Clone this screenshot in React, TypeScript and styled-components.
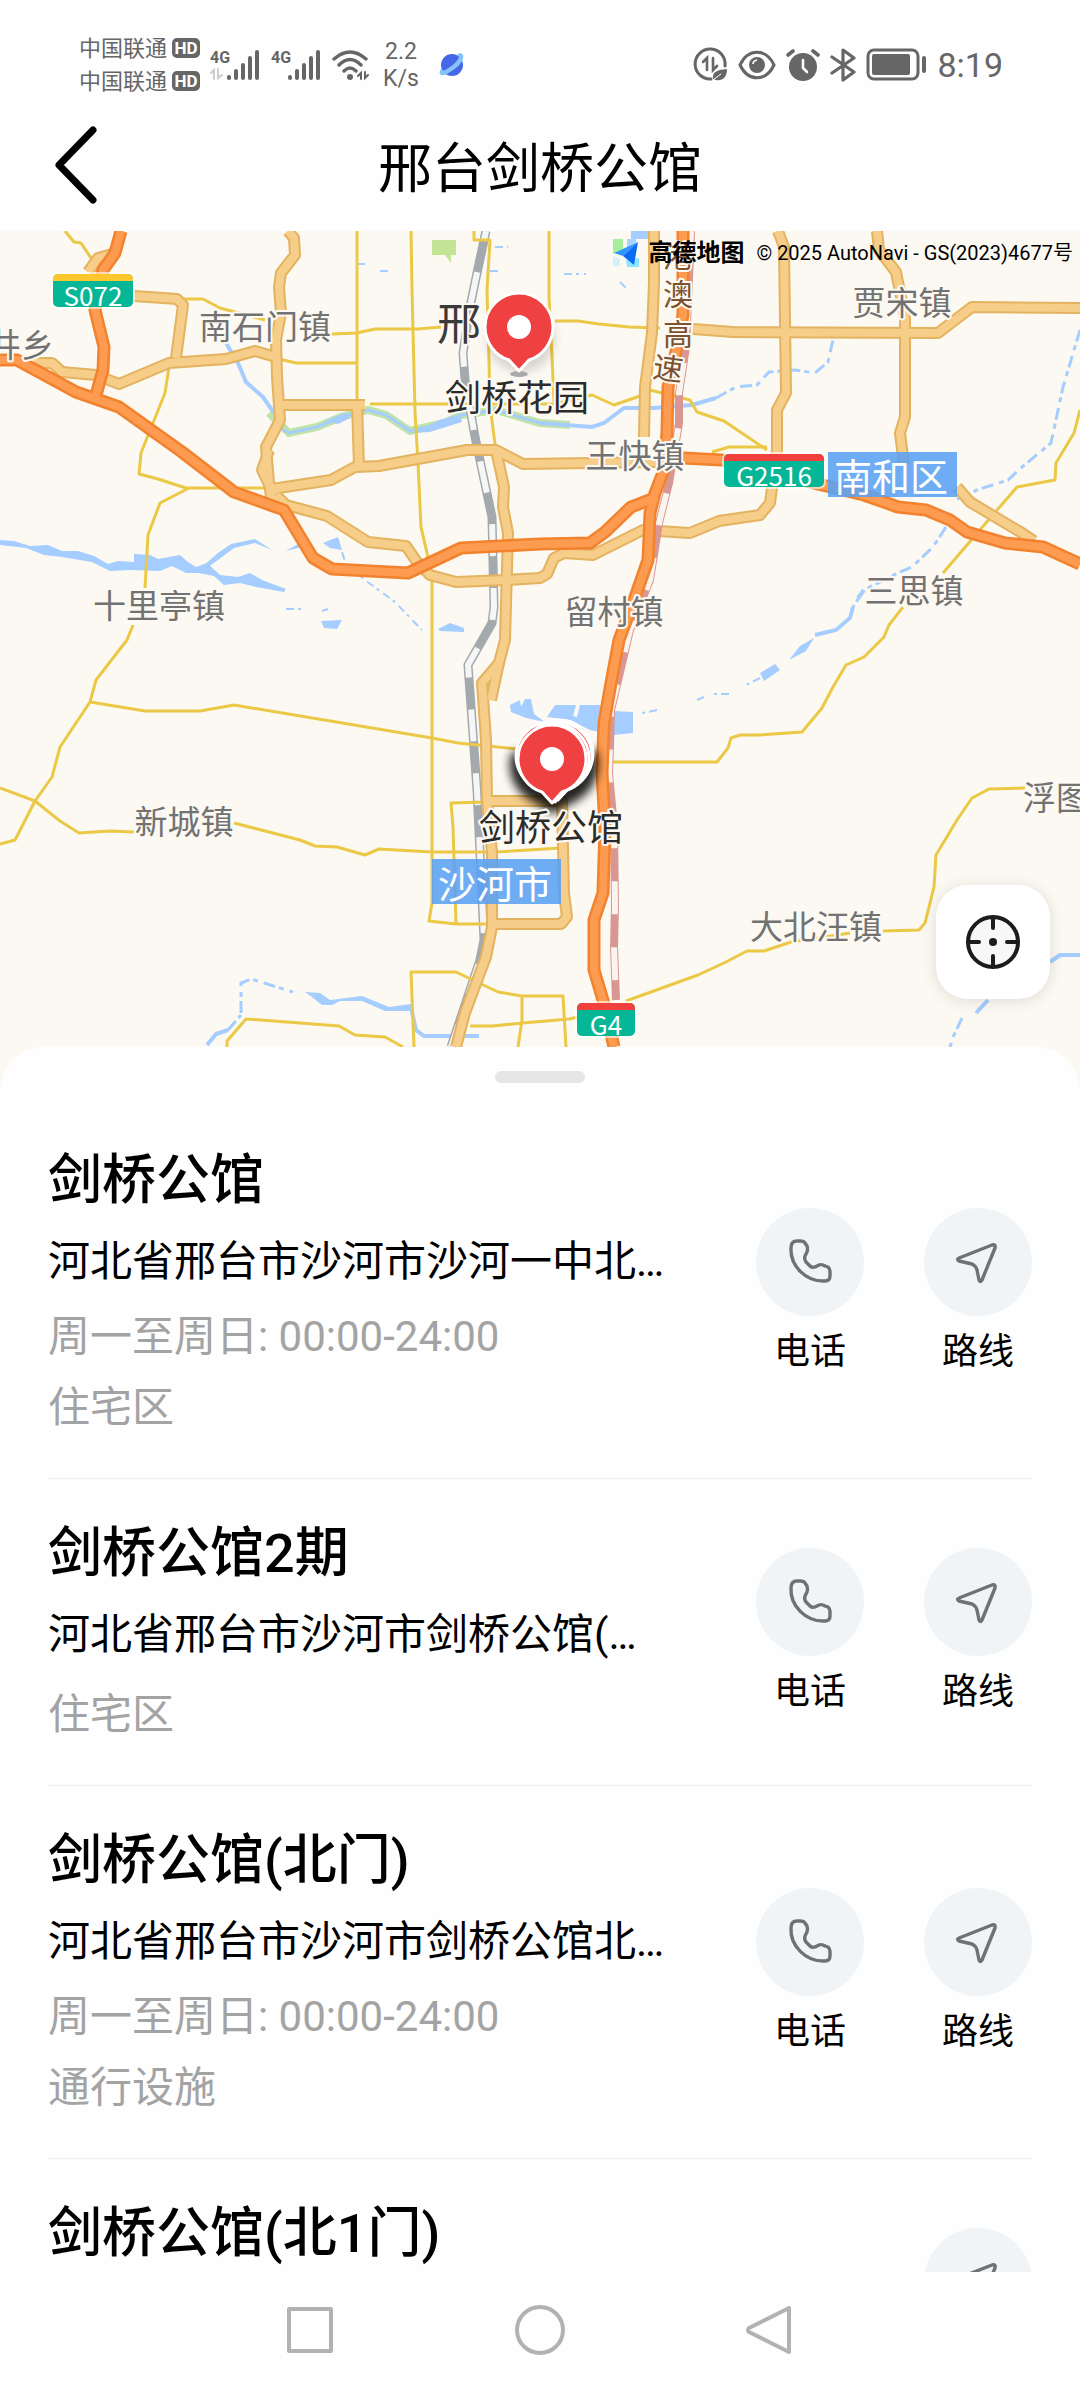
import React from "react";
import styled, { createGlobalStyle } from "styled-components";

const GlobalStyle = createGlobalStyle`
  * { box-sizing: border-box; }
  body {
    margin: 0;
    background: #fefefe;
    color: #000;
    font-family: Roboto, "Noto Sans CJK SC", sans-serif;
  }
  button { font: inherit; color: inherit; border: 0; padding: 0; background: none; cursor: pointer; }
  svg { display: block; }
`;

const Screen = styled.div`
  display: flex;
  flex-direction: column;
  height: 100vh;
  overflow: hidden;
`;

/* ---------- status bar ---------- */

const StatusBar = styled.div`
  display: flex;
  flex: none;
  justify-content: space-between;
  align-items: center;
  height: 105px;
  padding: 24px 77px 0 79px;
  color: #666;
`;

const StatusGroup = styled.div`
  display: flex;
  align-items: center;
  gap: 10px;
`;

const CarrierLine = styled.div`
  display: flex;
  align-items: center;
  gap: 5px;
  font-size: 22px;
  line-height: 33px;
`;

const HdBadge = styled.span`
  width: 28px;
  height: 20px;
  border-radius: 5px;
  background: #666;
  color: #fff;
  font-size: 17px;
  font-weight: 700;
  line-height: 20px;
  text-align: center;
`;

const Speed = styled.div`
  padding: 0 10px 0 3px;
  font-size: 23px;
  line-height: 27px;
  text-align: center;
`;

const Clock = styled.div`
  font-size: 34px;
  line-height: 40px;
`;

function Signal({ data }: { data?: boolean }) {
  return (
    <svg width="51" height="32" viewBox="0 0 51 32" fill="none" stroke="#666" strokeLinecap="round">
      <text x="0" y="14" fill="#666" stroke="none" fontSize="16" fontWeight="700">4G</text>
      {data && <path d="M1 24l3-3v9M8 20v9l4-3" stroke="#ccc" strokeWidth="2" />}
      <path d="M19 28v1M26 22v7M33 16v13M40 9v20M47 3v26" strokeWidth="4" />
    </svg>
  );
}

function Wifi() {
  return (
    <svg width="38" height="32" viewBox="0 0 38 32" fill="none" stroke="#666" strokeWidth="3.4" strokeLinecap="round">
      <path d="M2 10Q18 -4 34 10M7 16Q18 5 29 16M12 22Q18 16 24 22" />
      <circle cx="18" cy="28" r="3" fill="#666" stroke="none" />
      <path d="M26 27l3-3v6M33 23v6l3-3" strokeWidth="2" />
    </svg>
  );
}

function Planet() {
  return (
    <svg width="26" height="26" viewBox="0 0 26 26">
      <circle cx="13" cy="13" r="11" fill="#4668e8" />
      <path d="M21 1c6 1 3 9-3 14S3 26 1 22c-1-2 0-4 2-6 0 3 2 3 5 1C13 14 19 9 20 5c0-1-1-2-2-2 1-1 2-2 3-2z" fill="#84c4fa" />
    </svg>
  );
}

function DataSaver() {
  return (
    <svg width="35" height="35" viewBox="0 0 35 35" fill="none" stroke="#666" strokeWidth="3" strokeLinecap="round">
      <path d="M32 19A15 15 0 1 0 18 32" />
      <path d="M10 15l4-4v12M20 11v12l4-4" strokeWidth="2.6" />
      <path d="M20 32c-1-8 5-9 14-10 0 9-5 12-11 11z" fill="#666" stroke="none" />
      <path d="M20 33l8-6" stroke="#fff" strokeWidth="1" />
    </svg>
  );
}

function Eye() {
  return (
    <svg width="38" height="30" viewBox="0 0 38 30" fill="none" stroke="#666" strokeWidth="3">
      <path d="M2 15C10-2 28-2 36 15 28 32 10 32 2 15z" />
      <circle cx="19" cy="15" r="8" fill="#666" stroke="none" />
      <path d="M15 14q0-3 4-4" stroke="#fff" strokeWidth="1.6" />
    </svg>
  );
}

function Alarm() {
  return (
    <svg width="34" height="34" viewBox="0 0 34 34" fill="none" stroke="#666" strokeWidth="3.6" strokeLinecap="round">
      <circle cx="17" cy="19" r="14" fill="#666" stroke="none" />
      <path d="M2 7l5-4M32 7l-5-4" />
      <path d="M17 12v8l4 4" stroke="#fff" strokeWidth="2.6" />
    </svg>
  );
}

function Bluetooth() {
  return (
    <svg width="26" height="34" viewBox="0 0 26 34" fill="none" stroke="#666" strokeWidth="3.2" strokeLinecap="round" strokeLinejoin="round">
      <path d="M2 9l22 15-11 8V2l11 8L2 25" />
    </svg>
  );
}

function Battery() {
  return (
    <svg width="61" height="33" viewBox="0 0 61 33" fill="none" stroke="#666">
      <rect x="2" y="2" width="50" height="29" rx="6" strokeWidth="3" />
      <rect x="6" y="6" width="38" height="21" rx="2" fill="#666" stroke="none" />
      <path d="M58 10v13" strokeWidth="4" strokeLinecap="round" />
    </svg>
  );
}

/* ---------- header ---------- */

const Header = styled.header`
  display: grid;
  grid-template-columns: 96px 1fr 96px;
  align-items: center;
  flex: none;
  height: 126px;
  padding: 0 32px;
`;

const BackButton = styled.button`
  display: flex;
  padding-left: 20px;
`;

const Title = styled.h1`
  margin: 0;
  padding-top: 4px;
  font-size: 54px;
  font-weight: 400;
  line-height: 72px;
  text-align: center;
`;

/* ---------- map ---------- */

const MapArea = styled.section`
  position: relative;
  flex: none;
  height: 864px;
  overflow: hidden;
  background: #fcf9f2;
`;

const MapCanvas = styled.svg`
  width: 100%;
  height: 100%;
`;

const Attribution = styled.div`
  position: absolute;
  top: 7px;
  right: 7px;
  display: flex;
  align-items: center;
  font-size: 20px;
  line-height: 30px;
`;

const Brand = styled.strong`
  margin: 0 12px 0 8px;
  font-size: 24px;
  font-weight: 700;
`;

const LocateButton = styled.button`
  position: absolute;
  right: 30px;
  bottom: 96px;
  display: grid;
  place-items: center;
  width: 114px;
  height: 114px;
  border-radius: 32px;
  background: #fff;
  box-shadow: 0 2px 16px rgba(0, 0, 0, 0.12);
`;

const MapLabel = styled.text<{ $size?: number; $color?: string }>`
  font-size: ${(p) => p.$size ?? 33}px;
  fill: ${(p) => p.$color ?? "#727272"};
  stroke: #fcf9f2;
  stroke-width: 4px;
  stroke-linejoin: round;
  paint-order: stroke;
  text-anchor: middle;
  dominant-baseline: central;
`;

const PlateText = styled.text<{ $size: number }>`
  font-family: "Noto Sans CJK SC", "Noto Sans", sans-serif;
  font-size: ${(p) => p.$size}px;
  fill: #fff;
  text-anchor: middle;
  dominant-baseline: central;
`;

const minorRoads = [
  "M65 1L74 12L81 13L91 28L96 42",
  "M183 69L203 69L220 78L265 90",
  "M357 1V170",
  "M411 1L412 60L415 182L418 233L421 297L427 323L432 350V673L429 691L456 694H486",
  "M474 1V10H490L487 60L489 130L490 175L496 222",
  "M332 104L357 103L375 99H418L441 97",
  "M279 129L296 133H357",
  "M370 174H554L592 165L614 175L640 166",
  "M169 137L165 163L141 223L139 244L158 249L186 258H272",
  "M189 258L160 273L148 305L145 358",
  "M133 395L127 410L96 450L90 472L60 517L52 547L35 571L15 610L0 614",
  "M90 472L145 481H200L234 475L432 508L458 513L517 519",
  "M0 558L35 571L60 591L79 603L110 601L134 602",
  "M234 593L300 610L315 616L337 617L365 625L379 619L432 622H496L561 618",
  "M486 572L451 573L453 597L456 693",
  "M414 817L411 742H456L498 762L522 766H563L566 817",
  "M522 766V790L518 817",
  "M470 796H492L523 793L569 789L578 787",
  "M227 817V811L246 789L339 796L355 805L385 807L403 817",
  "M549 1V67L552 127L554 172",
  "M555 91H578L599 94L629 97L660 98",
  "M1080 180L1074 203L1056 233L1055 250L1017 257L991 287L943 343",
  "M903 377L889 395L884 407L864 427L846 435L833 457L822 478L802 502L760 505H740L731 508L728 518L717 532H611",
  "M1025 558L989 559L972 568L957 590L936 625L934 657L925 693L919 700L883 701",
  "M850 703L791 712L764 721H747L726 732L698 745L626 771",
  "M650 160L690 170L697 182L724 191L767 220",
  "M712 222L729 217H767",
];

const majorRoads = [
  "M134 66L177 69L183 75L176 128",
  "M88 42L98 28L112 24",
  "M288 1L294 8L295 25L281 43L279 57L281 83L276 110L277 147L280 190L266 217L269 253L272 273",
  "M269 220L262 240L274 265",
  "M34 133H52L62 142L96 145L119 154L169 133L226 129L255 121L276 127",
  "M281 175H365M357 173L359 237",
  "M272 259L331 250L355 237L379 236L467 220H496L523 234L660 232",
  "M276 265L286 275L327 286L368 312L406 316L417 332L430 345L456 352L506 350L540 348L547 344L554 328L564 323L593 325L643 300L690 303L719 291L760 285L770 273L777 220V180L786 163L784 17L778 1",
  "M496 220L504 257L503 277L508 303L505 410L499 433L482 453L486 510L487 570L492 623V697L486 727L465 783L456 817",
  "M499 433L491 470",
  "M491 571H562L564 663L567 687L561 694H492",
  "M654 1V53L652 103L645 157L644 207",
  "M693 99L733 102L938 103L972 77L1080 78",
  "M877 1L879 20L896 42L905 87V187L900 203L904 235",
  "M957 257L970 272L1022 303L1034 311",
];

const highways = [
  "M121 1L115 23L103 40L95 80L104 117L103 140L96 165",
  "M0 130H17L76 162L119 177L182 222L234 262L284 280L313 328L332 339L408 343L461 318L540 314L590 313L605 302L631 277L657 267",
  "M683 1V85L677 117L668 157L667 203L664 240L655 263L650 283L648 330L633 373L619 410L611 453L604 493L602 543L605 597L603 663L594 690V740L605 777L614 817",
  "M683 228L722 230L822 255L864 265L898 277L926 280L950 290L967 302L1005 313L1043 317L1080 334",
];

const railway =
  "M486 1L477 43L470 77L463 123L465 150L475 207L492 287L494 377L492 393L468 435L477 560L480 623L484 710L480 730L451 817";
const fastRail = "M691 1L686 117L679 163V193L669 253L659 293L650 350L630 400L611 480L610 517L609 543L614 597L615 677L614 717L616 770";

const waterAreas = [
  "M0 310L14 311L30 316L48 315L62 321L78 321L94 326L108 334L118 331L134 332V324L150 325L158 329L180 325L188 332L196 337L207 333L220 345L238 347L250 343L262 350L286 359L284 362L256 357L240 353L224 355L214 346L198 343L186 343L172 336L160 341L130 340L110 341L92 332L62 327L44 325L26 318L0 315z",
  "M203 336L218 323L231 314L255 309L272 320L255 313L234 318L222 327L207 338z",
  "M286 321L298 314L306 312L298 318z",
  "M323 313L338 307L342 320L330 318z",
  "M321 391L342 390L337 399L324 398z",
  "M438 399L450 393L464 398V402L440 401z",
  "M547 487L555 475H576L573 486L577 487L580 475H600L614 481L633 482V503L614 505L590 500L570 490z",
  "M510 475L520 470L521 477L525 469H531L534 484L545 492L526 488L511 482z",
  "M760 443L775 434L780 440L764 451zM789 430L800 416L814 408L806 421z",
  "M305 762L320 763L330 770L362 766L389 777L411 774V781H385L362 771L340 771L332 775H322L312 767z",
];

const streams = [
  "M226 113L238 133L246 152L263 167L274 183",
  "M540 193L592 197L604 193L624 178L654 178L692 175L716 168",
  "M411 777L416 800L424 806H479",
  "M207 815L216 804L228 800",
  "M1080 725L1060 725L1050 732M988 770L976 783",
  "M853 377L850 388L836 400L815 405",
  "M864 360L858 368",
];

const brokenStreams = [
  "M716 168L736 157L757 155L769 142L795 140L815 143L828 132L833 110",
  "M1080 100L1063 157L1051 213L1022 237L1008 250L977 260L955 270",
  "M946 297L933 317L912 337L898 343L864 360L853 377",
  "M241 783V753L251 749L293 762",
  "M228 800L241 785",
  "M962 788L953 807L950 817",
];

const faintStreams = [
  "M760 448L744 456M729 464H714M704 467L697 470M657 480L638 484",
  "M342 322L346 334L365 350L395 372L422 400",
  "M286 379H306M322 381L328 379",
  "M357 34H368M380 41H390M495 17H508M490 41H498M564 44H586M620 52L628 60",
];

const labels: [string, number, number][] = [
  ["南石门镇", 265, 97],
  ["井乡", 21, 115],
  ["十里亭镇", 159, 376],
  ["贾宋镇", 902, 73],
  ["王快镇", 635, 226],
  ["留村镇", 614, 382],
  ["三思镇", 914, 361],
  ["新城镇", 184, 592],
  ["大北汪镇", 816, 697],
  ["浮图", 1056, 568],
];

function Plate({ x, y, width, band, children }: { x: number; y: number; width: number; band: string; children: string }) {
  return (
    <g>
      <rect x={x - 2} y={y - 2} width={width + 4} height={37} rx={7} fill="#fff" opacity={0.6} />
      <rect x={x} y={y} width={width} height={33} rx={5} fill="#06b797" />
      <path d={`M${x} ${y + 7}v-2a5 5 0 0 1 5 -5h${width - 10}a5 5 0 0 1 5 5v2z`} fill={band} />
      <PlateText $size={26} x={x + width / 2} y={y + 20}>{children}</PlateText>
    </g>
  );
}

function District({ x, y, children }: { x: number; y: number; children: string }) {
  return (
    <g>
      <rect x={x} y={y} width={129} height={45} fill="#5aa0f2" opacity={0.88} />
      <PlateText $size={38} x={x + 63} y={y + 22}>{children}</PlateText>
    </g>
  );
}

function Pin({ x, y }: { x: number; y: number }) {
  return (
    <g transform={`translate(${x} ${y})`}>
      <path
        d="M0 44L-10 33C-24 29 -34 15 -34 0A34 34 0 0 1 34 0C34 15 24 29 10 33z"
        fill="#f04142"
        stroke="#fff"
        strokeWidth="3"
        strokeLinejoin="round"
      />
      <circle r="12" fill="#fff" />
    </g>
  );
}

function CityMap() {
  return (
    <MapCanvas viewBox="0 1 1080 864" preserveAspectRatio="xMidYMin slice" fill="none" role="img" aria-label="地图">
      <defs>
        <filter id="soft" x="-50%" y="-50%" width="200%" height="200%">
          <feGaussianBlur stdDeviation="5" />
        </filter>
      </defs>
      <path d="M432 10h24v15h-5v8l-6-8h-13z" fill="#c4e596" />
      <path d="M631 1h18v8h-18z" fill="#a5cdff" />
      <path d="M269 183L289 203L317 197L341 187L368 180L386 185L410 201L444 193L461 185L496 180L540 193L570 195" stroke="#bfe3a8" strokeWidth="8" />
      <path d="M280 198L289 203L317 197L341 187L368 180L386 185L410 201L444 193L461 185L496 180L540 193" stroke="#a5cdff" strokeWidth="3" />
      <path d="M325 191L344 183L350 188L338 194zM410 203L440 190L460 184L462 192L430 202z" fill="#a5cdff" />
      {waterAreas.map((d) => <path key={d} d={d} fill="#a5cdff" />)}
      {streams.map((d) => <path key={d} d={d} stroke="#a5cdff" strokeWidth="4" />)}
      {brokenStreams.map((d) => <path key={d} d={d} stroke="#a5cdff" strokeWidth="3" strokeDasharray="12 4 5 6" />)}
      {faintStreams.map((d) => <path key={d} d={d} stroke="#a5cdff" strokeWidth="2" strokeDasharray="8 4 3 5" />)}

      <path d={railway} stroke="#a4a9ad" strokeWidth="9" />
      <path d={railway} stroke="#f6f6f6" strokeWidth="6" strokeDasharray="32 32" strokeDashoffset="-42" />

      {minorRoads.map((d) => <path key={d} d={d} stroke="#ebc846" strokeWidth="3" strokeLinejoin="round" />)}

      <g strokeLinejoin="round">
        {majorRoads.map((d) => <path key={d} d={d} stroke="#e3b35f" strokeWidth="12" />)}
        {majorRoads.map((d) => <path key={d} d={d} stroke="#f7cd8a" strokeWidth="8" />)}
        <path d={fastRail} stroke="#d99794" strokeWidth="8" />
        <path d={fastRail} stroke="#fbf3ee" strokeWidth="6" strokeDasharray="33 33" />
        {highways.map((d) => <path key={d} d={d} stroke="#f2822e" strokeWidth="13" />)}
        {highways.map((d) => <path key={d} d={d} stroke="#fd9c50" strokeWidth="8" />)}
      </g>

      {labels.map(([name, x, y]) => <MapLabel key={name} x={x} y={y}>{name}</MapLabel>)}
      <MapLabel $size={44} $color="#3a3a3a" x={459} y={95}>邢</MapLabel>
      <MapLabel $size={30} $color="#7c5230" x={678} y={26}>港</MapLabel>
      <MapLabel $size={30} $color="#7c5230" x={678} y={64}>澳</MapLabel>
      <MapLabel $size={30} $color="#7c5230" x={678} y={104}>高</MapLabel>
      <MapLabel $size={30} $color="#7c5230" x={668} y={139} transform="rotate(8 668 139)">速</MapLabel>

      <Plate x={53} y={44} width={80} band="#fbc72c">S072</Plate>
      <Plate x={724} y={224} width={100} band="#f2403c">G2516</Plate>
      <Plate x={577} y={773} width={58} band="#f2403c">G4</Plate>
      <District x={828} y={222}>南和区</District>
      <District x={432} y={629}>沙河市</District>

      <circle cx="521" cy="108" r="34" fill="#000" opacity="0.14" filter="url(#soft)" />
      <ellipse cx="519" cy="144" rx="9" ry="3" fill="#aaa" />
      <Pin x={519} y={97} />
      <MapLabel $size={36} $color="#2b2b2b" x={517} y={169}>剑桥花园</MapLabel>

      <path d="M512 522a40 40 0 0 0 22 50l18 12 26-14a42 42 0 0 0 18-50z" fill="#000" opacity="0.85" filter="url(#soft)" />
      <Pin x={550} y={526} />
      <Pin x={559} y={524} />
      <Pin x={558} y={526} />
      <Pin x={555} y={528} />
      <Pin x={552} y={529} />
      <MapLabel $size={36} $color="#2b2b2b" x={551} y={599}>剑桥公馆</MapLabel>
    </MapCanvas>
  );
}

/* ---------- sheet with the places ---------- */

const Sheet = styled.main`
  position: relative;
  flex: 1;
  min-height: 0;
  margin-top: -48px;
  overflow: hidden;
  border-radius: 44px 44px 0 0;
  background: #fefefe;
`;

const HandleArea = styled.div`
  display: flex;
  justify-content: center;
  height: 59px;
  padding-top: 24px;
`;

const Handle = styled.span`
  width: 90px;
  height: 12px;
  border-radius: 6px;
  background: #e6e6e6;
`;

const PlaceList = styled.ul`
  margin: 0;
  padding: 0 48px;
  list-style: none;
`;

const PlaceItem = styled.li`
  display: flex;
  justify-content: space-between;
  align-items: center;
  min-height: 307px;
  padding: 39px 0 47px;
  border-bottom: 1px solid #f0f0f0;
`;

const PlaceInfo = styled.div`
  align-self: flex-start;
  min-width: 0;
`;

const PlaceName = styled.h2`
  margin: 0 0 16px;
  font-size: 54px;
  font-weight: 500;
  line-height: 72px;
`;

const Address = styled.p`
  margin: 0;
  font-size: 42px;
  line-height: 58px;
  white-space: nowrap;
`;

const Meta = styled.p<{ $space: number }>`
  margin: ${(p) => p.$space}px 0 0;
  color: #a3a3a3;
  font-size: 42px;
  line-height: 46px;
`;

const Actions = styled.div`
  display: flex;
  gap: 60px;
  margin: -39px 0 -47px;
`;

const ActionButton = styled.button`
  display: flex;
  flex-direction: column;
  align-items: center;
  gap: 12px;
  min-height: 168px;
  font-size: 36px;
  line-height: 48px;
`;

const ActionCircle = styled.span`
  display: grid;
  place-items: center;
  width: 108px;
  height: 108px;
  border-radius: 50%;
  background: #f0f4f7;
`;

function PhoneIcon() {
  return (
    <svg width="48" height="48" viewBox="0 0 48 48" fill="none" stroke="#6f7275" strokeWidth="3.4" strokeLinejoin="round">
      <path d="M5 10Q5 3 11 3H14Q18 3 19 5L21 8Q22 11 21 14L19 18Q18 21 20 24L24 28Q26 30 29 29L33 27Q36 26 39 28L42 29Q44 31 44 33V38Q44 43 39 43C20 44 4 28 5 10z" />
    </svg>
  );
}

function RouteIcon() {
  return (
    <svg width="48" height="48" viewBox="0 0 48 48" fill="none" stroke="#6f7275" strokeWidth="3.4" strokeLinejoin="round">
      <path d="M5 20L38 7Q42 6 41 10L28 42Q26 45 25 42L23 32Q22 28 18 26L5 23Q2 21 5 20z" />
    </svg>
  );
}

interface Place {
  name: string;
  address?: string;
  hours?: string;
  category?: string;
  phone: boolean;
}

const places: Place[] = [
  { name: "剑桥公馆", address: "河北省邢台市沙河市沙河一中北…", hours: "周一至周日: 00:00-24:00", category: "住宅区", phone: true },
  { name: "剑桥公馆2期", address: "河北省邢台市沙河市剑桥公馆(…", category: "住宅区", phone: true },
  { name: "剑桥公馆(北门)", address: "河北省邢台市沙河市剑桥公馆北…", hours: "周一至周日: 00:00-24:00", category: "通行设施", phone: true },
  { name: "剑桥公馆(北1门)", phone: false },
];

function PlaceRow({ place }: { place: Place }) {
  return (
    <PlaceItem>
      <PlaceInfo>
        <PlaceName>{place.name}</PlaceName>
        {place.address && <Address>{place.address}</Address>}
        {place.hours && <Meta $space={23}>{place.hours}</Meta>}
        {place.category && <Meta $space={place.hours ? 25 : 28}>{place.category}</Meta>}
      </PlaceInfo>
      <Actions>
        {place.phone && (
          <ActionButton type="button">
            <ActionCircle><PhoneIcon /></ActionCircle>
            电话
          </ActionButton>
        )}
        <ActionButton type="button" aria-label="路线">
          <ActionCircle><RouteIcon /></ActionCircle>
          {place.phone && "路线"}
        </ActionButton>
      </Actions>
    </PlaceItem>
  );
}

/* ---------- system navigation ---------- */

const NavBar = styled.nav`
  display: flex;
  flex: none;
  justify-content: center;
  align-items: center;
  gap: 180px;
  height: 116px;
  background: #fefefe;
`;

function NavIcon({ d }: { d: string }) {
  return (
    <svg width="50" height="50" viewBox="0 0 50 50" fill="none" stroke="#b2b2b2" strokeWidth="4" strokeLinejoin="round">
      <path d={d} />
    </svg>
  );
}

export default function App() {
  return (
    <Screen lang="zh-CN">
      <GlobalStyle />
      <StatusBar>
        <StatusGroup>
          <div>
            <CarrierLine>中国联通<HdBadge>HD</HdBadge></CarrierLine>
            <CarrierLine>中国联通<HdBadge>HD</HdBadge></CarrierLine>
          </div>
          <Signal data />
          <Signal />
          <Wifi />
          <Speed>2.2<br />K/s</Speed>
          <Planet />
        </StatusGroup>
        <StatusGroup>
          <DataSaver />
          <Eye />
          <Alarm />
          <Bluetooth />
          <Battery />
          <Clock>8:19</Clock>
        </StatusGroup>
      </StatusBar>

      <Header>
        <BackButton type="button" aria-label="返回">
          <svg width="48" height="84" viewBox="0 0 48 84" fill="none" stroke="#000" strokeWidth="7" strokeLinecap="round" strokeLinejoin="round">
            <path d="M41 4L7 39L41 74" />
          </svg>
        </BackButton>
        <Title>邢台剑桥公馆</Title>
      </Header>

      <MapArea>
        <CityMap />
        <Attribution>
          <svg width="28" height="30" viewBox="0 0 28 30">
            <path d="M1 1h10v10L1 16z" fill="#a6ee9c" />
            <path d="M15 1h9v4l-9 4z" fill="#a5d4ff" />
            <path d="M14 22l13-2v9H15z" fill="#8fe4ff" />
            <path d="M1 18l7 3v7H1z" fill="#d4f1fb" />
            <path d="M26 4L2 15l9 3z" fill="#2f95ff" />
            <path d="M26 4L11 18l11 9z" fill="#0a6cf5" />
          </svg>
          <Brand>高德地图</Brand>
          © 2025 AutoNavi - GS(2023)4677号
        </Attribution>
        <LocateButton type="button" aria-label="定位">
          <svg width="56" height="56" viewBox="0 0 56 56" fill="none" stroke="#1c1c1c" strokeWidth="4" strokeLinecap="round">
            <circle cx="28" cy="28" r="25" fill="#f7f7f7" />
            <path d="M28 4v10M28 42v10M4 28h10M42 28h10" />
            <circle cx="28" cy="28" r="4" fill="#1c1c1c" stroke="none" />
          </svg>
        </LocateButton>
      </MapArea>

      <Sheet>
        <HandleArea><Handle /></HandleArea>
        <PlaceList>
          {places.map((place) => <PlaceRow key={place.name} place={place} />)}
        </PlaceList>
      </Sheet>

      <NavBar>
        <button type="button" aria-label="最近任务"><NavIcon d="M4 4H46V46H4z" /></button>
        <button type="button" aria-label="主屏幕"><NavIcon d="M25 2A23 23 0 0 1 25 48A23 23 0 0 1 25 2z" /></button>
        <button type="button" aria-label="后退"><NavIcon d="M44 3V47L4 27Q2 25 4 23z" /></button>
      </NavBar>
    </Screen>
  );
}
